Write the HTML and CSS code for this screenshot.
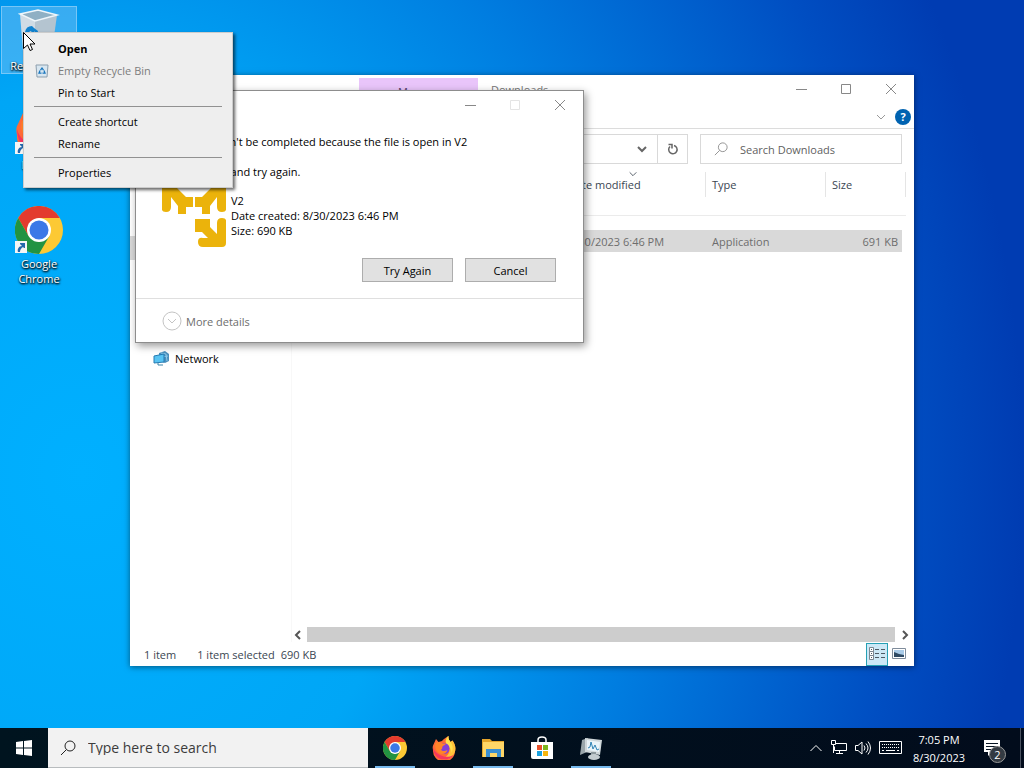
FILE: index.html
```html
<!DOCTYPE html>
<html lang="en">
<head>
  <meta charset="UTF-8" />
  <meta name="viewport" content="width=device-width, initial-scale=1.0" />
  <title>Desktop</title>
  <link rel="stylesheet" href="styles.css">
</head>
<body>
  <!-- Shared icons -->
  <svg class="defs" width="0" height="0" aria-hidden="true">
    <symbol id="chrome" viewBox="0 0 48 48">
      <circle cx="24" cy="24" r="24" fill="#fcc934"/>
      <path d="M24 12h20.8A24 24 0 0 0 3.2 12L13.6 30Z" fill="#e33b2e"/>
      <path d="M3.2 12 13.6 30 24 36 34.4 30 24 48A24 24 0 0 1 3.2 12Z" fill="#229342"/>
      <circle cx="24" cy="24" r="12" fill="#fff"/>
      <circle cx="24" cy="24" r="9.5" fill="#3b78e7"/>
    </symbol>
    <symbol id="firefox" viewBox="0 0 48 48">
      <path d="M3 17 8 6l5 6 7-2C23 6 29 2 33 0c-1 5 1 8 4 12l4-3c5 7 7 14 5 22A22 22 0 0 1 2 28c-1-4-1-8 1-11Z" fill="#ff6a36"/>
      <path d="M33 0c-1 5 1 8 4 12l4-3c8 10 8 24-1 32-6 5-14 6-20 5 9-4 16-11 15-21-1-7-5-9-8-14 0-5 3-9 6-11Z" fill="#ffc33a"/>
      <path d="M33 0c-1 5 1 8 4 12 6 8 5 16 2 22 0-9-5-13-10-17-3-6 0-13 4-17Z" fill="#ffe14d"/>
      <path d="M2 22c0 14 9 25 22 25 9 0 15-4 19-9-7 4-15 5-22 2C11 36 4 31 2 22Z" fill="#f5365f"/>
      <circle cx="24" cy="25" r="11" fill="#8440d8"/>
      <path d="M7 14c5-3 10-2 14 1h7c-1 3-6 4-7 6-1 3 0 5-3 6 2 4 8 4 13 1-2 7-9 10-15 7C8 31 5 23 7 14Z" fill="#ff8429"/>
    </symbol>
    <symbol id="shortcut" viewBox="0 0 12 12">
      <path d="M0 0h12v12H0Z" fill="#f5f5f5"/>
      <path d="M3 11C2 8 4 5 7 5L5 3V2h5v5H9L8 6C6 7 5 9 5 11Z" fill="#2468ac"/>
    </symbol>
    <symbol id="minimize" viewBox="0 0 12 12"><path d="M1 6.500h11" stroke="currentColor"/></symbol>
    <symbol id="maximize" viewBox="0 0 12 12"><path d="M1.500 1.500h9v9h-9Z" fill="none" stroke="currentColor"/></symbol>
    <symbol id="close" viewBox="0 0 12 12"><path d="m1 1 10 10M11 1 1 11" stroke="currentColor"/></symbol>
    <symbol id="chevron" viewBox="0 0 12 12"><path d="m2 4 4 4 4-4" fill="none" stroke="currentColor"/></symbol>
    <symbol id="magnifier" viewBox="0 0 16 16"><path d="M1 15 6.500 9.500" stroke="currentColor"/><circle cx="10" cy="6" r="5" fill="none" stroke="currentColor"/></symbol>
    <symbol id="recycle" viewBox="0 0 16 16">
      <path d="m5 6 3-4 3 4M12 7l2 5h-5M7 12H2l2-5" fill="none" stroke="#1a76bd" stroke-width="2.500"/>
    </symbol>
  </svg>

  <main class="desktop">
    <div class="shortcuts">
      <a class="shortcut selected" href="#">
        <svg class="shortcut-icon" viewBox="0 0 48 48">
          <path d="m5 6 3 37 12 5V13Z" fill="#d0dce5"/>
          <path d="m20 13 22-6-5 36-17 5Z" fill="#b4c4d0"/>
          <path d="m5 6 18-4 19 5-22 6Z" fill="#8fb0c4" stroke="#eff6fa" stroke-width="1.500"/>
          <path d="M10 24q1-6 7-6l3 3-1 4-4-2-2 4ZM19 20l4 3-1 5-5-1 3-2Z" fill="#1183cf"/>
        </svg>
        <span>Recycle Bin</span>
      </a>
      <a class="shortcut" href="#">
        <svg class="shortcut-icon" viewBox="0 0 48 48">
          <use href="#firefox" width="48" height="48"/>
          <use href="#shortcut" y="35" width="12" height="12"/>
        </svg>
        <span>Firefox</span>
      </a>
      <a class="shortcut" href="#">
        <svg class="shortcut-icon" viewBox="0 0 48 48">
          <use href="#chrome" width="48" height="48"/>
          <use href="#shortcut" y="35" width="12" height="12"/>
        </svg>
        <span>Google Chrome</span>
      </a>
    </div>

    <section class="window explorer">
      <header class="explorer-title">
        <span class="manage-tab">Manage</span>
        <span class="window-name">Downloads</span>
        <div class="window-buttons">
          <button type="button" aria-label="Minimize"><svg><use href="#minimize"/></svg></button>
          <button type="button" aria-label="Maximize"><svg><use href="#maximize"/></svg></button>
          <button type="button" aria-label="Close"><svg><use href="#close"/></svg></button>
        </div>
      </header>
      <div class="ribbon">
        <button type="button" class="expand" aria-label="Expand the ribbon"><svg><use href="#chevron"/></svg></button>
        <button type="button" class="help" aria-label="Help">?</button>
      </div>
      <div class="address-row">
        <div class="address">
          <button type="button" class="thick" aria-label="Previous locations"><svg><use href="#chevron"/></svg></button>
          <button type="button" class="refresh" aria-label="Refresh">
            <svg viewBox="0 0 12 12"><path d="M7 2.500A4.200 4.200 0 1 1 3 3.500M1.500 1.500H5V5.500" fill="none" stroke="currentColor" stroke-width="1.500"/></svg>
          </button>
        </div>
        <label class="file-search">
          <svg><use href="#magnifier"/></svg>
          <input type="text" placeholder="Search Downloads" aria-label="Search Downloads">
        </label>
      </div>
      <div class="explorer-body">
        <nav class="tree">
          <div class="tree-selected"></div>
          <a href="#">
            <svg viewBox="0 0 17 16">
              <path d="M6 3 12 1l4 3v7l-4 2-6-2Z" fill="#4b8fbd"/>
              <path d="m8 3 5 1 1 7M7 7l8-1" fill="none" stroke="#8ec9e8"/>
              <path d="m1 6 10-2v8L1 13Z" fill="#58c3f2" stroke="#247bb3"/>
              <path d="M5 13v2h5" fill="none" stroke="#3c84a8"/>
            </svg>
            Network
          </a>
        </nav>
        <div class="files">
          <table>
            <thead>
              <tr>
                <th class="col-name"></th>
                <th class="col-date"><span>Date modified</span><svg><use href="#chevron"/></svg></th>
                <th class="col-type"><span>Type</span></th>
                <th class="col-size"><span>Size</span></th>
              </tr>
            </thead>
            <tbody>
              <tr>
                <td></td>
                <td>8/30/2023 6:46 PM</td>
                <td>Application</td>
                <td class="size">691 KB</td>
              </tr>
            </tbody>
          </table>
          <div class="scrollbar">
            <button type="button" class="scroll-left thick" aria-label="Scroll left"><svg><use href="#chevron"/></svg></button>
            <div class="scroll-thumb"></div>
            <button type="button" class="scroll-right thick" aria-label="Scroll right"><svg><use href="#chevron"/></svg></button>
          </div>
        </div>
      </div>
      <footer class="status">
        <span class="count">1 item</span>
        <span>1 item selected</span>
        <span>690 KB</span>
        <div class="views">
          <button type="button" class="active" aria-label="Details view">
            <svg viewBox="0 0 16 14"><path d="M.500.500h4v4h-4Zm0 4h4v4h-4Zm0 4h4v4h-4Z" fill="#fff" stroke="#7b8791"/><path d="M6 2.500h4m2 0h4M6 6.500h4m2 0h4M6 10.500h4m2 0h4M2 2.500h1m-1 4h1m-1 4h1" stroke="#4e5a64"/></svg>
          </button>
          <button type="button" aria-label="Large icons view">
            <svg viewBox="0 0 16 14"><path d="M1.500 1.500h13v10h-13Z" fill="#fff" stroke="#7f8c9b"/><path d="M3 3h10v7H3Z" fill="#a9cbe8"/><path d="m3 5 5 2 5 1v2H3Z" fill="#2f4a63"/></svg>
          </button>
        </div>
      </footer>
    </section>

    <section class="window dialog" role="dialog" aria-label="File In Use">
      <header class="window-buttons">
        <button type="button" aria-label="Minimize"><svg><use href="#minimize"/></svg></button>
        <button type="button" aria-label="Maximize" disabled><svg><use href="#maximize"/></svg></button>
        <button type="button" aria-label="Close"><svg><use href="#close"/></svg></button>
      </header>
      <div class="dialog-text">
        <p>The action can't be completed because the file is open in V2</p>
        <p>Close the file and try again.</p>
      </div>
      <div class="file-info">
        <svg viewBox="0 0 64 64" fill="#ebb30b">
          <path d="M0 0h28v5H15l9 9h7v10h-7v7h-8v-8L9 14v10q0 5-5 5t-4-5Z"/>
          <path d="M64 0H36v5h13l-9 9h-7v10h7v7h8v-8l7-9v10q0 5 5 5t4-5Z"/>
          <path d="M33 36h15v8l7 7V40q0-5 5-5t4 5v20q0 4-4 4H41q-5 0-5-5t5-4h5l-6-6h-7Z"/>
        </svg>
        <ul>
          <li>V2</li>
          <li>Date created: 8/30/2023 6:46 PM</li>
          <li>Size: 690 KB</li>
        </ul>
      </div>
      <div class="dialog-actions">
        <button type="button">Try Again</button>
        <button type="button">Cancel</button>
      </div>
      <footer>
        <button type="button" class="more">
          <svg viewBox="0 0 20 20" fill="none" stroke="#c4c4c4"><circle cx="10" cy="10" r="9"/><path d="m6 8 4 4 4-4"/></svg>
          More details
        </button>
      </footer>
    </section>

    <div class="context-menu" role="menu">
      <button type="button" role="menuitem" class="default">Open</button>
      <button type="button" role="menuitem" disabled>
        <svg viewBox="0 0 14 14"><path d="M1 1h12l-1 12H2Z" fill="#d8e6f0" stroke="#8d9fae"/><use href="#recycle" x="3" y="3" width="8" height="8"/></svg>
        Empty Recycle Bin
      </button>
      <button type="button" role="menuitem">Pin to Start</button>
      <hr>
      <button type="button" role="menuitem">Create shortcut</button>
      <button type="button" role="menuitem">Rename</button>
      <hr>
      <button type="button" role="menuitem">Properties</button>
    </div>

    <svg class="cursor" viewBox="0 0 12 19"><path d="M.500.500v16l4-3.500 2.500 5.500 2.500-1-2.500-5.500h5Z" fill="#fff" stroke="#000"/></svg>
  </main>

  <footer class="taskbar">
    <button type="button" class="start" aria-label="Start">
      <svg viewBox="0 0 16 16" fill="#fff"><path d="m0 2 7-1v6.500H0ZM8 1l8-1v7.500H8ZM0 8.500h7V15l-7-1Zm8 0h8V16l-8-1Z"/></svg>
    </button>
    <label class="task-search">
      <svg><use href="#magnifier"/></svg>
      <input type="text" placeholder="Type here to search" aria-label="Type here to search">
    </label>
    <div class="apps">
      <button type="button" class="running" aria-label="Google Chrome"><svg><use href="#chrome"/></svg></button>
      <button type="button" aria-label="Firefox"><svg><use href="#firefox"/></svg></button>
      <button type="button" class="running" aria-label="File Explorer">
        <svg viewBox="0 0 24 24"><path d="M1 3h8l2 2h12v16H1Z" fill="#e5a52b"/><path d="M2 6h21v15H2Z" fill="#ffd667"/><path d="M5 13h15v8h-4v-4H9v4H5Z" fill="#3a8fd2"/></svg>
      </button>
      <button type="button" aria-label="Microsoft Store">
        <svg viewBox="0 0 24 24"><path d="M8 6V4q0-3 4-3t4 3v2" fill="none" stroke="#fff" stroke-width="1.500"/><path d="M1 6h22v17H3q-2 0-2-2Z" fill="#fff"/><path d="M7 9h5v5H7Z" fill="#e8502a"/><path d="M13 9h5v5h-5Z" fill="#7db51e"/><path d="M7 15h5v5H7Z" fill="#19a1df"/><path d="M13 15h5v5h-5Z" fill="#f7b50d"/></svg>
      </button>
      <button type="button" class="running" aria-label="Monitor">
        <svg viewBox="0 0 24 24"><path d="m3 4 6-2-1 14-7 3Z" fill="#9aa6ab"/><path d="m6 2 17 2-2 15-15-3Z" fill="#cfd7da"/><path d="m8 4 13 2-1 10-12-2Z" fill="#eaf4f9"/><path d="m9 12 2-1 1-5 2 7 2-4 2 5 2-1" fill="none" stroke="#2f83b5"/><path d="M12 16h5v4h-5Z" fill="#8d999e"/><ellipse cx="15" cy="21" rx="6" ry="3" fill="#c3ccd0"/></svg>
      </button>
    </div>
    <div class="tray">
      <svg class="tray-up" viewBox="0 0 14 14"><path d="m1.500 10 5.500-5.500 5.500 5.500"/></svg>
      <svg class="tray-net" viewBox="0 0 16 16"><path d="M4.500 3.500h11v7H3.500v-4M.500.500h4v4h-4ZM8.500 10.500v3M5 13.500h7M2.500 5v8"/></svg>
      <svg class="tray-sound" viewBox="0 0 16 16"><path d="M.500 5.500h2.500L7 2v12L3 10.500H.500ZM9 5.500q2 2.500 0 5M11 3.500q4 4.500 0 9M13 1.500q5 6.500 0 13"/></svg>
      <svg class="tray-keys" viewBox="0 0 23 14"><path d="M.500.500h22v12H.500Z"/><path d="M3 3.500h17M3 6.500h17" stroke-dasharray="1 1"/><path d="M3 9.500h2m2 0h9m2 0h2"/></svg>
      <time class="clock">
        <span>7:05 PM</span>
        <span>8/30/2023</span>
      </time>
      <button type="button" class="notices" aria-label="2 notifications">
        <svg viewBox="0 0 18 18"><path d="M1 1h16v12H9l-4 4v-4H1Z" fill="#fff"/><path d="M3 4.500h12M3 7.500h12M3 10.500h8" stroke="#091625"/></svg>
        <span class="badge">2</span>
      </button>
    </div>
  </footer>
</body>
</html>
```
FILE: styles.css
```css
* {
  box-sizing: border-box;
}
body {
  margin: 0;
  height: 100vh;
  display: flex;
  flex-direction: column;
  overflow: hidden;
  font-family: "Open Sans", "Noto Sans", sans-serif;
  font-size: 11px;
  line-height: 15px;
  color: #000;
}
button, input {
  font: inherit;
  color: inherit;
  background: none;
  border: 0;
  padding: 0;
  margin: 0;
}
a {
  color: inherit;
  text-decoration: none;
}
svg {
  width: 12px;
  height: 12px;
  flex: none;
  display: block;
}
.defs {
  position: absolute;
  width: 0;
  height: 0;
}
p, ul {
  margin: 0;
  padding: 0;
  list-style: none;
}

/* Desktop */
.desktop {
  flex: 1;
  position: relative;
  background: radial-gradient(92% 150% at 8% 65%, #00b0ff 0%, #00a6f6 35%, #007de0 60%, #004ec2 87%, #003cb2 100%);
}
.shortcuts {
  display: grid;
  grid-template-columns: 76px;
  grid-auto-rows: 99px;
  align-items: start;
  padding: 6px 1px;
}
.shortcut {
  display: flex;
  flex-direction: column;
  align-items: center;
  gap: 2px;
  padding: 1px 8px 0;
  border: 1px solid transparent;
  color: #fff;
  text-align: center;
  text-shadow: 1px 1px 2px #000, 0 1px 2px #000;
}
.shortcut.selected {
  background-color: rgba(140, 200, 245, 0.4);
  border-color: rgba(160, 215, 250, 0.6);
}
.shortcut-icon {
  width: 48px;
  height: 48px;
}

/* Windows */
.window {
  position: absolute;
  display: flex;
  flex-direction: column;
  background-color: #fff;
}
.window-buttons {
  display: flex;
  justify-content: flex-end;
  padding-right: 1px;
}
.window-buttons button {
  width: 45px;
  height: 28px;
  display: grid;
  place-items: center;
  color: #888;
}
.window-buttons button:disabled {
  color: #e4e4e4;
}

/* File explorer */
.explorer {
  left: 130px;
  right: 110px;
  top: 75px;
  bottom: 62px;
  box-shadow: 0 1px 6px rgba(0, 0, 0, 0.5);
  color: #3b4652;
}
.explorer-title {
  display: flex;
  height: 30px;
  padding-left: 229px;
  color: #777;
}
.manage-tab {
  width: 119px;
  margin-top: 3px;
  padding-top: 6px;
  background-color: #e9c5fa;
  color: #56406a;
  text-align: center;
}
.window-name {
  padding: 7px 13px;
}
.explorer-title .window-buttons {
  margin-left: auto;
}
.ribbon {
  display: flex;
  justify-content: flex-end;
  align-items: center;
  gap: 8px;
  height: 24px;
  padding-right: 3px;
  border-bottom: 1px solid #dcdcdc;
}
.ribbon .expand {
  color: #999;
}
.help {
  width: 16px;
  height: 16px;
  border-radius: 50%;
  background-color: #0063b1;
  color: #fff;
  font-weight: bold;
}
.address-row {
  display: flex;
  gap: 12px;
  padding: 5px 12px;
}
.address {
  flex: 1;
  display: flex;
  justify-content: flex-end;
  border: 1px solid #d9d9d9;
}
.address button {
  width: 30px;
  display: grid;
  place-items: center;
  color: #666;
}
.thick svg {
  stroke: currentColor;
}
.thick use {
  stroke-width: 2px;
}
.address .refresh {
  border-left: 1px solid #d9d9d9;
}
.file-search {
  display: flex;
  align-items: center;
  gap: 12px;
  width: 202px;
  height: 30px;
  padding: 0 13px;
  border: 1px solid #d9d9d9;
  color: #888;
}
.file-search svg {
  width: 14px;
  height: 14px;
}
.file-search input {
  flex: 1;
  min-width: 0;
}
.file-search input::placeholder {
  color: #5f5f5f;
  opacity: 1;
}
.explorer-body {
  flex: 1;
  display: flex;
  min-height: 0;
}
.tree {
  width: 162px;
  border-right: 1px solid #f8f8f8;
}
.tree-selected {
  height: 24px;
  margin: 67px 0 90px;
  background-color: #d9d9d9;
}
.tree a {
  display: flex;
  align-items: center;
  gap: 5px;
  padding-left: 23px;
  color: #000;
}
.tree svg {
  width: 17px;
  height: 16px;
}
.files {
  flex: 1;
  display: flex;
  flex-direction: column;
  justify-content: space-between;
}
table {
  width: calc(100% - 8px);
  table-layout: fixed;
  border-collapse: separate;
  border-spacing: 0;
}
th {
  position: relative;
  height: 47px;
  padding: 3px 0 0;
  border-bottom: 1px solid #ebebeb;
  font-weight: normal;
  text-align: left;
  vertical-align: top;
}
th span {
  display: block;
  height: 25px;
  padding: 5px 6px;
  border-left: 1px solid #e5e5e5;
}
th svg {
  position: absolute;
  top: 0;
  left: 50%;
  width: 10px;
  height: 10px;
  margin-left: -5px;
}
.col-date {
  width: 144px;
}
.col-type {
  width: 120px;
}
.col-size {
  width: 81px;
}
.col-size span {
  border-right: 1px solid #e5e5e5;
}
tbody::before {
  content: "";
  display: block;
  height: 14px;
}
td {
  height: 22px;
  padding: 0 7px;
  background-color: #d9d9d9;
  color: #6d6d6d;
}
.size {
  padding-right: 4px;
  border-right: 4px solid transparent;
  background-clip: padding-box;
  text-align: right;
}
.scrollbar {
  display: flex;
  height: 15px;
  color: #555;
}
.scrollbar button {
  display: grid;
  align-items: center;
}
.scroll-left {
  width: 15px;
}
.scroll-right {
  width: 19px;
  padding-left: 4px;
}
.scroll-left svg {
  transform: rotate(90deg);
}
.scroll-right svg {
  transform: rotate(-90deg);
}
.scroll-thumb {
  flex: 1;
  background-color: #cdcdcd;
}
.status {
  display: flex;
  align-items: center;
  gap: 6px;
  height: 24px;
  padding-left: 14px;
}
.count {
  margin-right: 15px;
}
.views {
  display: flex;
  margin-left: auto;
  padding-right: 4px;
}
.views button {
  display: grid;
  place-items: center;
  width: 22px;
  height: 23px;
}
.views svg {
  width: 16px;
  height: 14px;
}
.views .active {
  background-color: #cce8f6;
  border: 1px solid #26a0b5;
}

/* File in use dialog */
.dialog {
  left: 135px;
  top: 90px;
  width: 449px;
  border: 1px solid #8d8d8d;
  box-shadow: 2px 3px 8px rgba(0, 0, 0, 0.4);
}
.dialog-text {
  display: grid;
  gap: 15px;
  padding: 15px 26px 14px;
}
.file-info {
  display: flex;
  gap: 5px;
  padding-left: 26px;
}
.file-info svg {
  width: 64px;
  height: 64px;
  margin-top: -10px;
}
.dialog-actions {
  display: flex;
  justify-content: flex-end;
  gap: 12px;
  padding: 11px 27px 16px;
}
.dialog-actions button {
  width: 91px;
  height: 24px;
  background-color: #e1e1e1;
  border: 1px solid #adadad;
}
.dialog footer {
  padding: 12px 26px 11px;
  border-top: 1px solid #dfdfdf;
}
.more {
  display: flex;
  align-items: center;
  gap: 4px;
  color: #6d6d6d;
}
.more svg {
  width: 20px;
  height: 20px;
}

/* Context menu */
.context-menu {
  position: absolute;
  left: 23px;
  top: 32px;
  width: 210px;
  padding: 4px 2px;
  background-color: #eee;
  border: 1px solid #ccc;
  box-shadow: 2px 2px 3px rgba(0, 0, 0, 0.6);
}
.context-menu button {
  position: relative;
  display: block;
  width: 100%;
  height: 22px;
  padding-left: 32px;
  text-align: left;
}
.context-menu button:disabled {
  color: #7d7d7d;
}
.context-menu .default {
  font-weight: bold;
}
.context-menu svg {
  position: absolute;
  left: 9px;
  top: 5px;
  width: 14px;
  height: 14px;
}
.context-menu hr {
  margin: 3px 8px;
  border: 0;
  border-top: 1px solid #919191;
}
.cursor {
  position: absolute;
  left: 23px;
  top: 32px;
  width: 12px;
  height: 19px;
}

/* Taskbar */
.taskbar {
  display: flex;
  height: 40px;
  background: linear-gradient(90deg, #00141f, #020c1c);
  color: #fff;
}
.start {
  width: 48px;
  display: grid;
  place-items: center;
}
.start svg {
  width: 16px;
  height: 16px;
}
.task-search {
  display: flex;
  align-items: center;
  gap: 12px;
  width: 320px;
  padding: 0 12px;
  background-color: #f2f2f2;
  border: 1px solid #b8bcbe;
  border-width: 0 0 1px;
  color: #222;
  font-size: 14px;
}
.task-search svg {
  width: 16px;
  height: 16px;
}
.task-search input {
  flex: 1;
  min-width: 0;
}
.task-search input::placeholder {
  color: #3c3c3c;
  opacity: 1;
}
.apps {
  display: flex;
  gap: 9px;
  padding-left: 7px;
}
.apps button {
  display: grid;
  place-items: center;
  width: 40px;
  padding-top: 2px;
  border-bottom: 2px solid transparent;
}
.apps .running {
  border-color: #76b9ed;
}
.apps svg {
  width: 24px;
  height: 24px;
}
.tray {
  display: flex;
  align-items: center;
  gap: 8px;
  margin-left: auto;
  padding-right: 3px;
}
.tray > svg {
  width: 16px;
  height: 16px;
  fill: none;
  stroke: #fff;
}
.tray .tray-up {
  width: 14px;
  height: 14px;
}
.tray .tray-keys {
  width: 23px;
  height: 14px;
}
.clock {
  display: grid;
  gap: 3px;
  width: 58px;
  text-align: center;
}
.notices {
  position: relative;
  width: 45px;
  height: 40px;
  border-right: 1px solid #4a5260;
}
.notices svg {
  width: 18px;
  height: 18px;
  margin-left: 7px;
}
.badge {
  position: absolute;
  left: 13px;
  top: 18px;
  width: 17px;
  height: 17px;
  border: 1px solid #999;
  border-radius: 50%;
  background-color: #333a42;
  text-align: center;
}
```
